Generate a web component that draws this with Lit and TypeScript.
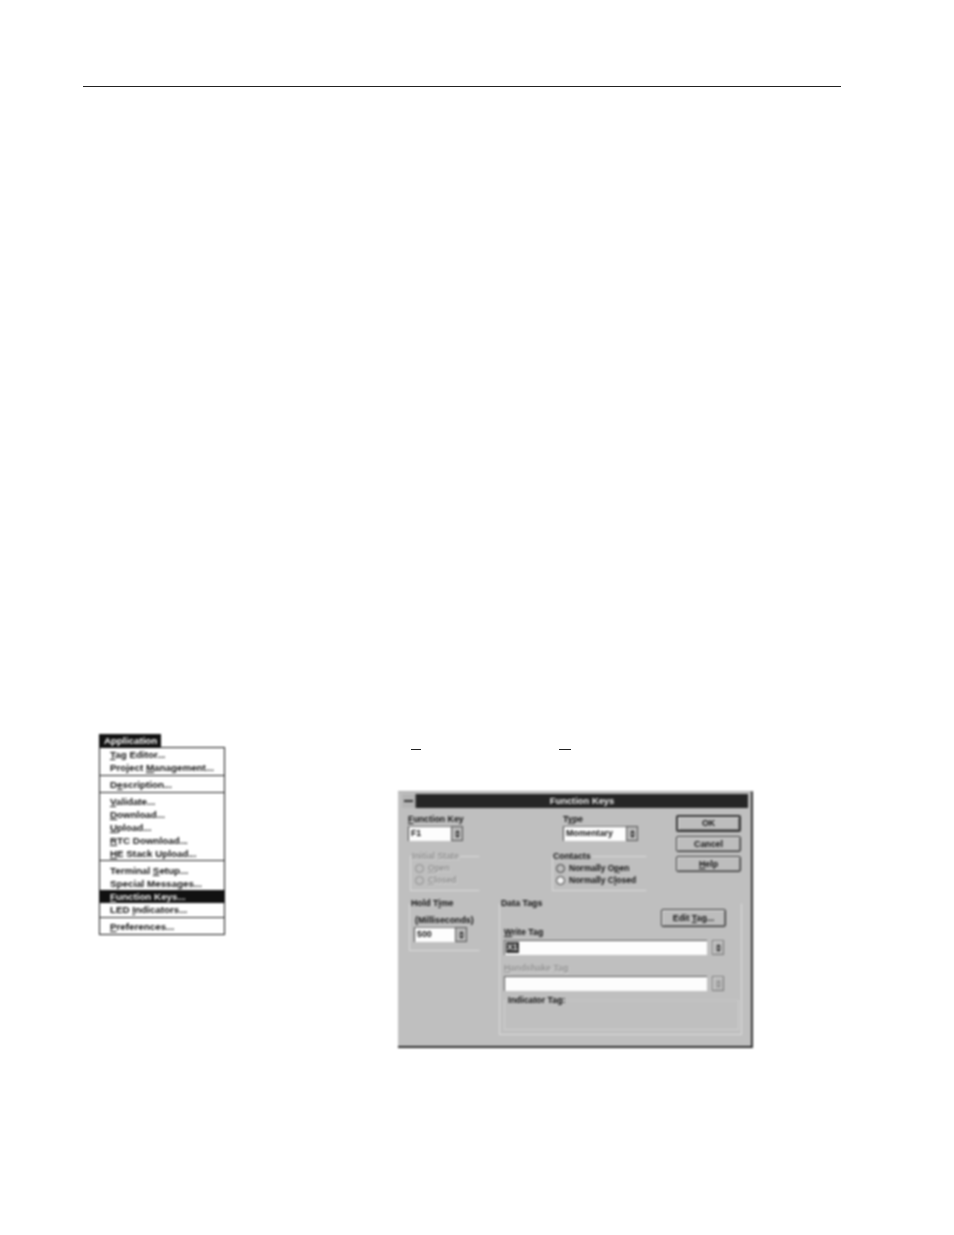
import { LitElement, html, css } from "lit";
import { customElement } from "lit/decorators.js";

@customElement("app-root")
export class AppRoot extends LitElement {
  static styles = css`
    :host { display: block; width: 954px; height: 1235px; background: #fff; overflow: hidden;
      font-family: "Liberation Sans", Arial, sans-serif; color: #111; }
    .page { padding: 86px 0 0 83px; }
    .rule { width: 758px; height: 1px; background: #222; }
    .content { display: flex; margin: 647px 0 0 16px; }

    .menu { width: 126px; filter: blur(0.8px); font-size: 9.8px; font-weight: 700; }
    .menu-title { width: 62px; height: 13px; line-height: 13px; background: #111; color: #fff; padding-left: 5px; box-sizing: border-box; }
    .menu-box { border: 1px solid #111; box-sizing: border-box; height: 188px; }
    .mi { height: 13px; line-height: 13px; padding-left: 10px; white-space: nowrap; }
    .mi.sel { background: #111; color: #eee; }
    .sep { height: 1px; background: #222; margin: 1px 0 2px; }
    .sep.tight { margin: 0 0 3px; }
    u { text-underline-offset: 1px; }

    .right { margin-left: 173px; width: 355px; }
    .dashes { display: flex; height: 57px; padding: 15px 0 0 13px; box-sizing: border-box; }
    .dash { height: 1px; background: #222; }
    .d1 { width: 10px; } .d2 { width: 12px; margin-left: 138px; }

    .dialog { width: 355px; height: 257px; box-sizing: border-box; background: #bfbfbf; border-right: 2px solid #333; border-bottom: 2px solid #2a2a2a; border-top: 1px solid #a8a8a8; padding-top: 2px; filter: blur(0.8px); font-size: 8.8px; font-weight: 700; }
    .titlebar { display: flex; height: 14px; margin: 0 3px 0 4px; }
    .sys { width: 14px; display: flex; align-items: center; justify-content: center; background: #b4b4b4; border-right: 1px solid #777; box-sizing: border-box; }
    .sys i { display: block; width: 9px; height: 2px; background: #333; }
    .tt { flex: 1; background: #262626; color: #eee; text-align: center; line-height: 14px; font-size: 9.4px; }

    .top { display: flex; padding: 5px 0 0 10px; height: 84px; box-sizing: border-box; }
    .col1 { width: 72px; }
    .col2 { width: 95px; margin-left: 72px; }
    .col3 { width: 65px; margin-left: 29px; padding-top: 2px; display: flex; flex-direction: column; gap: 4px; }
    .lbl { height: 12px; line-height: 12px; white-space: nowrap; }
    .lbl.ind { margin-left: 11px; }
    .dis { color: #8f8f8f; text-shadow: 0.6px 0.6px 0 #dcdcdc; }

    .select { display: flex; height: 15px; margin-top: 1px; box-sizing: border-box; }
    .val { flex: 1; background: #fdfdfd; border-left: 1px solid #444; border-top: 1px solid #777; line-height: 13px; padding-left: 2px; }
    .sbtn { width: 12px; box-sizing: border-box; border: 1px solid #555; background: #b8b8b8; display: flex; align-items: center; justify-content: center; }
    .s55 { width: 55px; } .s75 { width: 75px; margin-left: 11px; } .s53 { width: 53px; margin: 1px 0 0 4px; }

    fieldset { margin: 0; padding: 0; border: 1px solid #dadada; min-width: 0; box-sizing: border-box; }
    legend { padding: 0 1px 0 0; line-height: 12px; font-size: inherit; margin-left: 1px; }
    .fs-state { margin: 9px 0 0 2px; width: 70px; height: 41px; border-right-color: transparent; padding: 0 0 0 4px; }
    .fs-state legend { margin-left: -3px; }
    .fs-cont { margin: 9px 0 0 0; width: 95px; height: 41px; border-right-color: transparent; padding: 0 0 0 3px; }
    .fs-cont legend { margin-left: -3px; }
    .radio { display: flex; align-items: center; gap: 4px; height: 12px; white-space: nowrap; font-size: 8.5px; }
    .radio svg { flex: none; }

    .bottom { display: flex; padding: 0 0 0 11px; margin-top: 5px; }
    .fs-hold { width: 71px; height: 54px; border-top-color: transparent; border-right-color: transparent; padding: 5px 0 0 0; }
    .ms { margin-left: 5px; }
    .fs-data { width: 243px; height: 138px; margin-left: 19px; border-top-color: transparent; padding: 0 0 0 4px; }
    .fs-data > legend { margin-left: -3px; }
    .editrow { display: flex; justify-content: flex-end; padding: 0 15px 0 0; height: 17px; align-items: flex-start; }
    .btn { height: 16px; box-sizing: border-box; border: 1px solid #333; border-radius: 2px; background: #bdbdbd; box-shadow: inset 1px 1px 0 #e4e4e4, inset -1px -1px 0 #808080; text-align: center; line-height: 14px; }
    .btn.def { height: 17px; border-width: 2px; line-height: 13px; }
    .btn.edit { width: 65px; height: 18px; line-height: 16px; }
    .field { display: flex; gap: 5px; margin-top: 2px; height: 15px; }
    .input { width: 203px; background: #fdfdfd; border-top: 1px solid #555; border-left: 1px solid #555; box-sizing: border-box; padding: 0 0 0 1px; line-height: 13px; }
    .input b { display: inline-block; background: #333; color: #ddd; padding: 0 1px; height: 11px; line-height: 11px; margin-top: 1px; vertical-align: top; }
    .tbtn { width: 12px; box-sizing: border-box; border: 1px solid #777; background: #b8b8b8; display: flex; align-items: center; justify-content: center; box-shadow: inset 1px 1px 0 #ddd; }
    .spacer7 { height: 7px; }
    .fs-ind { width: 235px; height: 36px; margin-top: 3px; border-color: #cfcfcf; border-top-color: #c6c6c6; }
    .fs-ind legend { margin-left: 3px; }
  `;

  private arrow(dis = false) {
    const c = dis ? "#8a8a8a" : "#222";
    return html`<svg width="5" height="8" viewBox="0 0 6 9"><path d="M3 0 L6 3.5 H0Z M3 9 L6 5.5 H0Z" fill=${c}/></svg>`;
  }
  private radio(on: boolean, dis = false) {
    const c = dis ? "#8a8a8a" : "#333";
    return html`<svg width="9" height="9" viewBox="0 0 9 9">
      <circle cx="4.5" cy="4.5" r="4" fill=${dis || on ? "#bfbfbf" : "#f4f4f4"} stroke=${c} stroke-width="1"/>
      ${on ? html`<circle cx="4.5" cy="4.5" r="2" fill=${c}/>` : ""}
    </svg>`;
  }

  render() {
    return html`
      <div class="page">
        <div class="rule"></div>
        <div class="content">
          <div class="menu">
            <div class="menu-title">Application</div>
            <div class="menu-box">
              <div class="mi"><u>T</u>ag Editor...</div>
              <div class="mi">Project <u>M</u>anagement...</div>
              <div class="sep"></div>
              <div class="mi">D<u>e</u>scription...</div>
              <div class="sep"></div>
              <div class="mi"><u>V</u>alidate...</div>
              <div class="mi"><u>D</u>ownload...</div>
              <div class="mi"><u>U</u>pload...</div>
              <div class="mi"><u>R</u>TC Download...</div>
              <div class="mi"><u>H</u>E Stack Upload...</div>
              <div class="sep tight"></div>
              <div class="mi">Terminal <u>S</u>etup...</div>
              <div class="mi">Special Messages...</div>
              <div class="mi sel"><u>F</u>unction Keys...</div>
              <div class="mi">LED <u>I</u>ndicators...</div>
              <div class="sep"></div>
              <div class="mi"><u>P</u>references...</div>
            </div>
          </div>
          <div class="right">
            <div class="dashes"><div class="dash d1"></div><div class="dash d2"></div></div>
            <div class="dialog">
              <div class="titlebar"><div class="sys"><i></i></div><div class="tt">Function Keys</div></div>
              <div class="top">
                <div class="col1">
                  <div class="lbl"><u>F</u>unction Key</div>
                  <div class="select s55"><div class="val">F1</div><div class="sbtn">${this.arrow()}</div></div>
                  <fieldset class="fs-state"><legend class="dis">Initial State</legend>
                    <div class="radio dis">${this.radio(true, true)}<span><u>O</u>pen</span></div>
                    <div class="radio dis">${this.radio(false, true)}<span><u>C</u>losed</span></div>
                  </fieldset>
                </div>
                <div class="col2">
                  <div class="lbl ind">T<u>y</u>pe</div>
                  <div class="select s75"><div class="val">Momentary</div><div class="sbtn">${this.arrow()}</div></div>
                  <fieldset class="fs-cont"><legend>Contacts</legend>
                    <div class="radio">${this.radio(true)}<span>Normally O<u>p</u>en</span></div>
                    <div class="radio">${this.radio(false)}<span>Normally C<u>l</u>osed</span></div>
                  </fieldset>
                </div>
                <div class="col3">
                  <div class="btn def">OK</div>
                  <div class="btn">Cancel</div>
                  <div class="btn"><u>H</u>elp</div>
                </div>
              </div>
              <div class="bottom">
                <fieldset class="fs-hold"><legend>Hold T<u>i</u>me</legend>
                  <div class="lbl ms">(Milliseconds)</div>
                  <div class="select s53"><div class="val">500</div><div class="sbtn">${this.arrow()}</div></div>
                </fieldset>
                <fieldset class="fs-data"><legend>Data Tags</legend>
                  <div class="editrow"><div class="btn edit">Edit <u>T</u>ag...</div></div>
                  <div class="lbl"><u>W</u>rite Tag</div>
                  <div class="field"><div class="input"><b>X1</b></div><div class="tbtn">${this.arrow()}</div></div>
                  <div class="spacer7"></div>
                  <div class="lbl dis"><u>H</u>andshake Tag</div>
                  <div class="field"><div class="input"></div><div class="tbtn">${this.arrow(true)}</div></div>
                  <fieldset class="fs-ind"><legend>Indicator Tag:</legend></fieldset>
                </fieldset>
              </div>
            </div>
          </div>
        </div>
      </div>
    `;
  }
}
